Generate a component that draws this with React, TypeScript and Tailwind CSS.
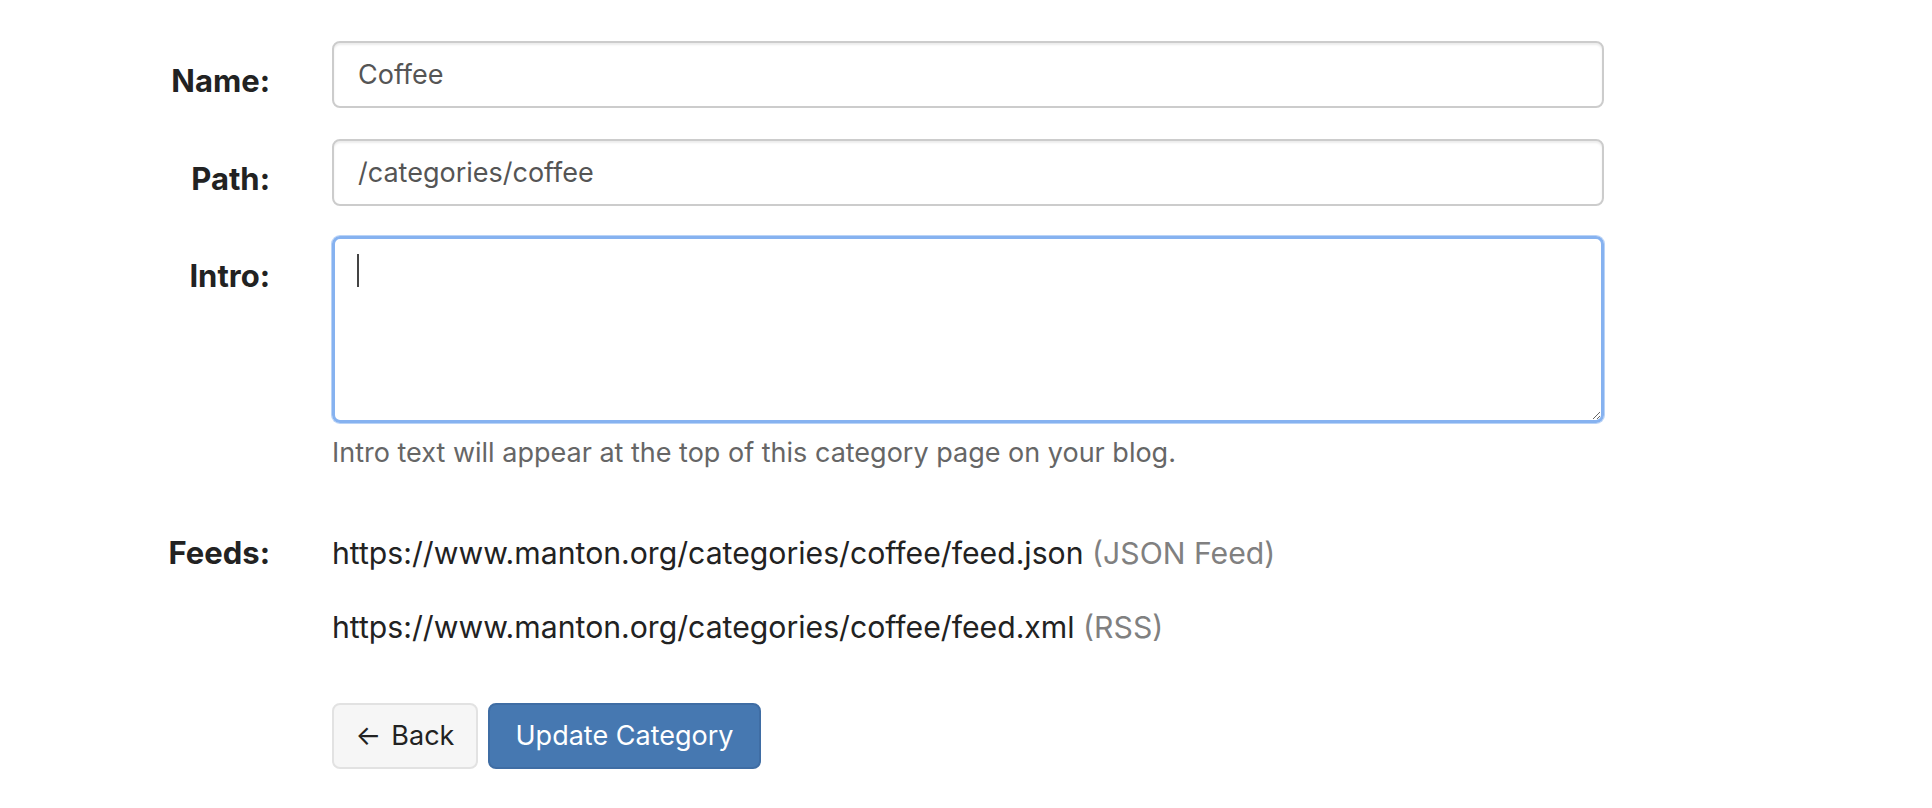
import React from "react";

export default function App() {
  const font = { fontFamily: "Inter, 'Noto Sans', sans-serif" };
  return (
    <div className="min-h-screen bg-white text-[#222]" style={font}>
      <div className="pt-[41px] flex flex-col">
        {/* Name */}
        <div className="flex items-start gap-[62px]">
          <label className="w-[270px] pt-[20px] text-right text-[31px] font-bold leading-[40px] text-[#222]">
            Name:
          </label>
          <input
            defaultValue="Coffee"
            className="w-[1272px] h-[67px] rounded-[8px] border-2 border-[#ccc] px-[24px] text-[27px] text-[#555] shadow-[inset_0_2px_2px_rgba(0,0,0,0.075)] outline-none"
          />
        </div>
        {/* Path */}
        <div className="mt-[31px] flex items-start gap-[62px]">
          <label className="w-[270px] pt-[20px] text-right text-[31px] font-bold leading-[40px] text-[#222]">
            Path:
          </label>
          <input
            defaultValue="/categories/coffee"
            className="w-[1272px] h-[67px] rounded-[8px] border-2 border-[#ccc] px-[24px] text-[27px] text-[#555] shadow-[inset_0_2px_2px_rgba(0,0,0,0.075)] outline-none"
          />
        </div>
        {/* Intro */}
        <div className="mt-[30px] flex items-start gap-[62px]">
          <label className="w-[270px] pt-[20px] text-right text-[31px] font-bold leading-[40px] text-[#222]">
            Intro:
          </label>
          <div className="flex flex-col">
            <div className="relative w-[1272px] h-[187px]">
              <textarea className="block w-full h-full rounded-[8px] border-[3px] border-[#86b2f0] shadow-[0_0_0_1px_#b9d3f7] px-[23px] py-[12px] text-[27px] text-[#555] outline-none resize-y" />
              <span className="absolute left-[25px] top-[18px] w-[2px] h-[33px] bg-[#444]" />
            </div>
            <p className="mt-[10px] text-[27px] leading-[40px] text-[#666]">
              Intro text will appear at the top of this category page on your blog.
            </p>
          </div>
        </div>
        {/* Feeds */}
        <div className="mt-[56px] flex items-start gap-[62px]">
          <label className="w-[270px] text-right text-[31px] font-bold leading-[48px] text-[#222]">
            Feeds:
          </label>
          <div className="flex flex-col gap-[26px] text-[30.2px] leading-[48px] text-[#222]">
            <div>
              https://www.manton.org/categories/coffee/feed.json{" "}
              <span className="text-[#808080]">(JSON Feed)</span>
            </div>
            <div>
              https://www.manton.org/categories/coffee/feed.xml{" "}
              <span className="text-[#808080]">(RSS)</span>
            </div>
          </div>
        </div>
        {/* Buttons */}
        <div className="mt-[52px] flex gap-[10px] pl-[332px]">
          <button className="h-[66px] w-[146px] rounded-[8px] border-2 border-[#e2e2e2] bg-[#f6f6f6] text-[27px] text-[#222] flex items-center justify-center gap-[10px]">
            <span>←</span>
            <span>Back</span>
          </button>
          <button className="h-[66px] w-[273px] rounded-[8px] border-2 border-[#3f6da4] bg-[#4678b1] text-[27px] text-white flex items-center justify-center">
            Update Category
          </button>
        </div>
      </div>
    </div>
  );
}
